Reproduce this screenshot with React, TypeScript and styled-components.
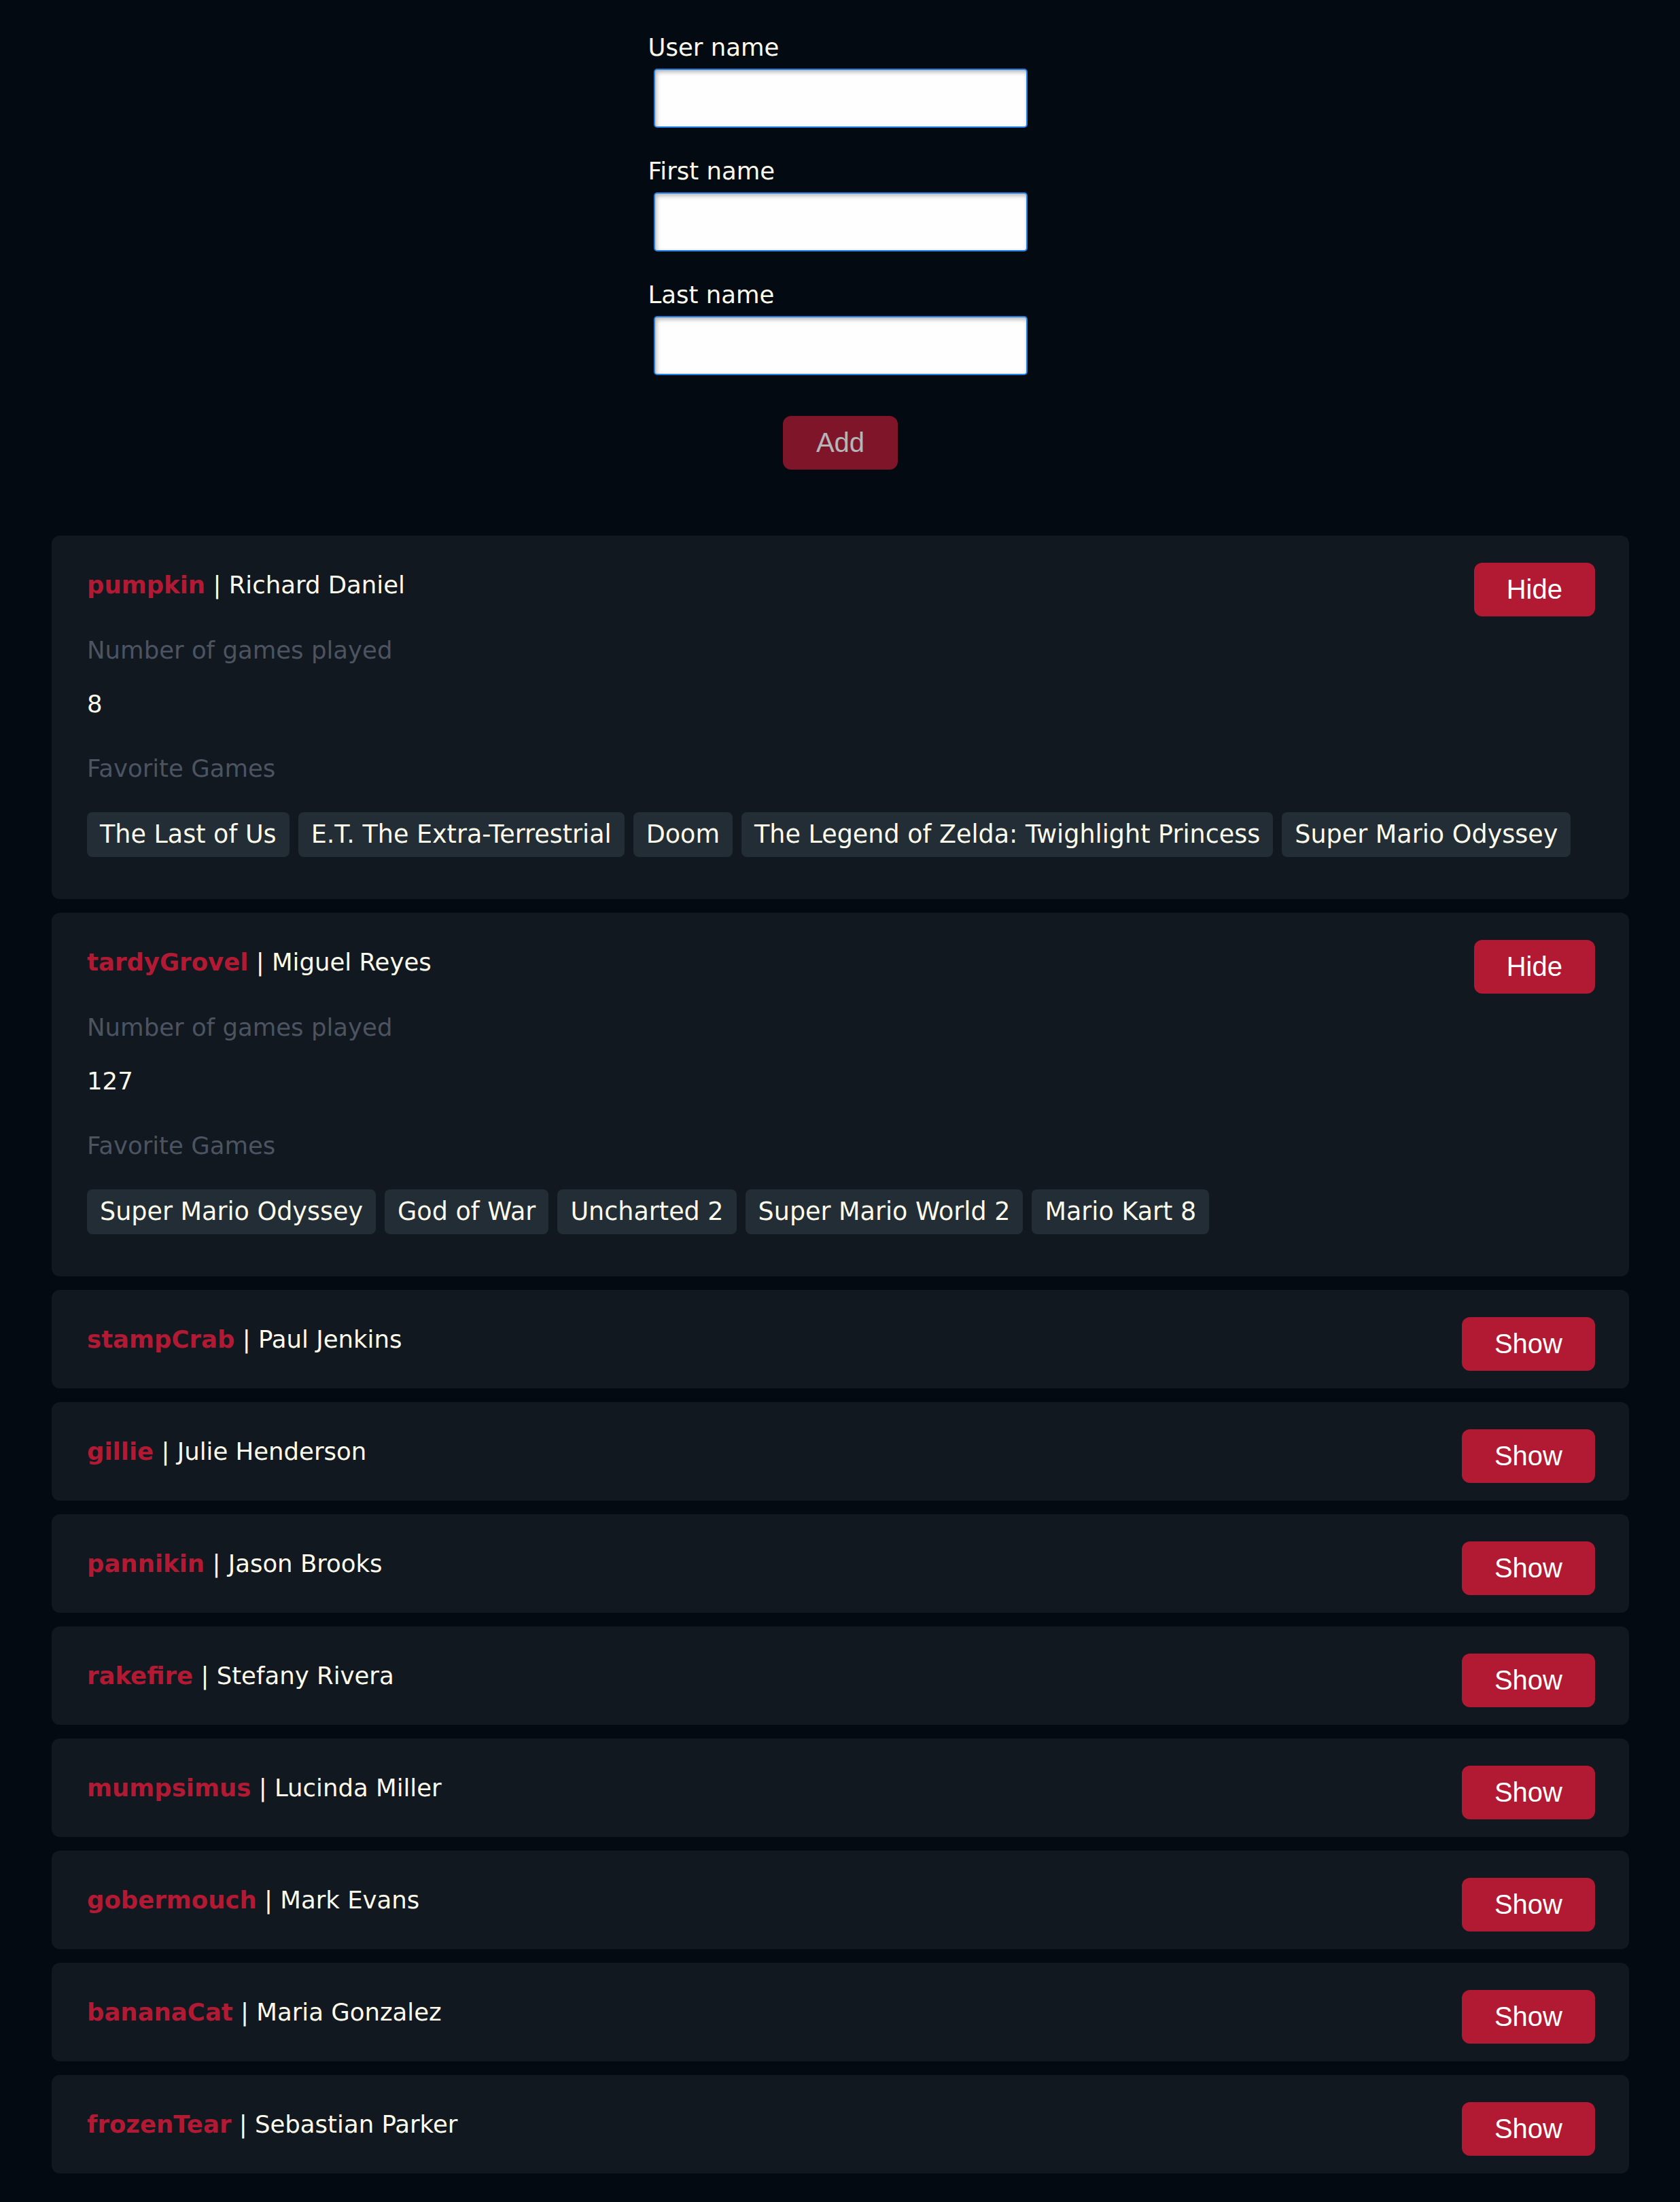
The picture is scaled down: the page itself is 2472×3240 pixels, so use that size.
import React, { useState } from "react";
import styled, { createGlobalStyle } from "styled-components";

const GlobalStyle = createGlobalStyle`
  html, body {
    margin: 0;
    padding: 0;
    background: #040a12;
  }
  body {
    font-family: "DejaVu Sans", Verdana, sans-serif;
    color: #fdfbec;
  }
  * { box-sizing: border-box; }
`;

const Page = styled.div`
  min-height: 3240px;
  padding: 49px 75px 42px 76px;
  background: #040a12;
`;

const Form = styled.form`
  width: 566px;
  margin: 0 auto;
  display: flex;
  flex-direction: column;
`;

const Field = styled.div<{ $first?: boolean }>`
  display: flex;
  flex-direction: column;
  margin-top: ${(p) => (p.$first ? "0" : "43px")};
`;

const Label = styled.label`
  font-size: 35.5px;
  line-height: 42px;
  color: #fdfbec;
`;

const Input = styled.input`
  display: block;
  width: 550px;
  height: 87px;
  margin: 10px 8px 0;
  border: 2px solid #2182e6;
  border-radius: 5px;
  background: #fefefe;
  box-shadow: inset 2px 3px 6px rgba(0, 0, 0, 0.3);
  font-size: 32px;
  padding: 0 12px;
  outline: none;
`;

const Button = styled.button`
  font-family: "Liberation Sans", Arial, sans-serif;
  font-size: 40px;
  line-height: 47px;
  padding: 16px 48px;
  border: none;
  border-radius: 12px;
  background: #b21a34;
  color: #ffffff;
  cursor: pointer;
  flex-shrink: 0;

  &:disabled {
    opacity: 0.7;
    cursor: default;
  }
`;

const AddButton = styled(Button)`
  align-self: center;
  margin-top: 60px;
  padding: 16px 49px;
`;

const List = styled.div`
  margin-top: 97px;
  display: flex;
  flex-direction: column;
  gap: 20px;
`;

const Card = styled.div`
  background: #111820;
  border-radius: 12px;
  padding: 40px 50px 26px 52px;
`;

const Header = styled.div`
  display: flex;
  justify-content: space-between;
  align-items: flex-start;
`;

const Name = styled.div`
  padding-top: 12px;
  font-size: 35.5px;
  line-height: 42px;
  color: #fdfbec;
`;

const UserName = styled.span`
  font-weight: bold;
  color: #b21a34;
`;

const Details = styled.div`
  display: flex;
  flex-direction: column;
  padding-bottom: 36px;
`;

const Caption = styled.div<{ $gap: number }>`
  margin-top: ${(p) => p.$gap}px;
  font-size: 35.5px;
  line-height: 42px;
  color: #4b5460;
`;

const Value = styled.div`
  margin-top: 37px;
  font-size: 35.5px;
  line-height: 42px;
  color: #fdfbec;
`;

const Tags = styled.div`
  margin-top: 43px;
  display: flex;
  flex-wrap: wrap;
  gap: 13px;
`;

const Tag = styled.span`
  background: #222d35;
  border-radius: 8px;
  padding: 12px 19px;
  font-size: 36.5px;
  line-height: 42px;
  color: #fdfbec;
`;

type Player = {
  user: string;
  first: string;
  last: string;
  played: number;
  games: string[];
};

const players: Player[] = [
  {
    user: "pumpkin",
    first: "Richard",
    last: "Daniel",
    played: 8,
    games: [
      "The Last of Us",
      "E.T. The Extra-Terrestrial",
      "Doom",
      "The Legend of Zelda: Twighlight Princess",
      "Super Mario Odyssey",
    ],
  },
  {
    user: "tardyGrovel",
    first: "Miguel",
    last: "Reyes",
    played: 127,
    games: [
      "Super Mario Odyssey",
      "God of War",
      "Uncharted 2",
      "Super Mario World 2",
      "Mario Kart 8",
    ],
  },
  { user: "stampCrab", first: "Paul", last: "Jenkins", played: 0, games: [] },
  { user: "gillie", first: "Julie", last: "Henderson", played: 0, games: [] },
  { user: "pannikin", first: "Jason", last: "Brooks", played: 0, games: [] },
  { user: "rakefire", first: "Stefany", last: "Rivera", played: 0, games: [] },
  { user: "mumpsimus", first: "Lucinda", last: "Miller", played: 0, games: [] },
  { user: "gobermouch", first: "Mark", last: "Evans", played: 0, games: [] },
  { user: "bananaCat", first: "Maria", last: "Gonzalez", played: 0, games: [] },
  { user: "frozenTear", first: "Sebastian", last: "Parker", played: 0, games: [] },
];

function PlayerCard({ player, initiallyOpen }: { player: Player; initiallyOpen: boolean }) {
  const [open, setOpen] = useState(initiallyOpen);
  return (
    <Card>
      <Header>
        <Name>
          <UserName>{player.user}</UserName> | {player.first} {player.last}
        </Name>
        <Button type="button" onClick={() => setOpen(!open)}>
          {open ? "Hide" : "Show"}
        </Button>
      </Header>
      {open && (
        <Details>
          <Caption $gap={29}>Number of games played</Caption>
          <Value>{player.played}</Value>
          <Caption $gap={53}>Favorite Games</Caption>
          <Tags>
            {player.games.map((g) => (
              <Tag key={g}>{g}</Tag>
            ))}
          </Tags>
        </Details>
      )}
    </Card>
  );
}

export default function App() {
  const [userName, setUserName] = useState("");
  const [firstName, setFirstName] = useState("");
  const [lastName, setLastName] = useState("");
  const disabled = !userName || !firstName || !lastName;

  return (
    <>
      <GlobalStyle />
      <Page>
        <Form onSubmit={(e) => e.preventDefault()}>
          <Field $first>
            <Label htmlFor="username">User name</Label>
            <Input id="username" value={userName} onChange={(e) => setUserName(e.target.value)} />
          </Field>
          <Field>
            <Label htmlFor="firstname">First name</Label>
            <Input id="firstname" value={firstName} onChange={(e) => setFirstName(e.target.value)} />
          </Field>
          <Field>
            <Label htmlFor="lastname">Last name</Label>
            <Input id="lastname" value={lastName} onChange={(e) => setLastName(e.target.value)} />
          </Field>
          <AddButton type="submit" disabled={disabled}>
            Add
          </AddButton>
        </Form>
        <List>
          {players.map((p, i) => (
            <PlayerCard key={p.user} player={p} initiallyOpen={i < 2} />
          ))}
        </List>
      </Page>
    </>
  );
}
